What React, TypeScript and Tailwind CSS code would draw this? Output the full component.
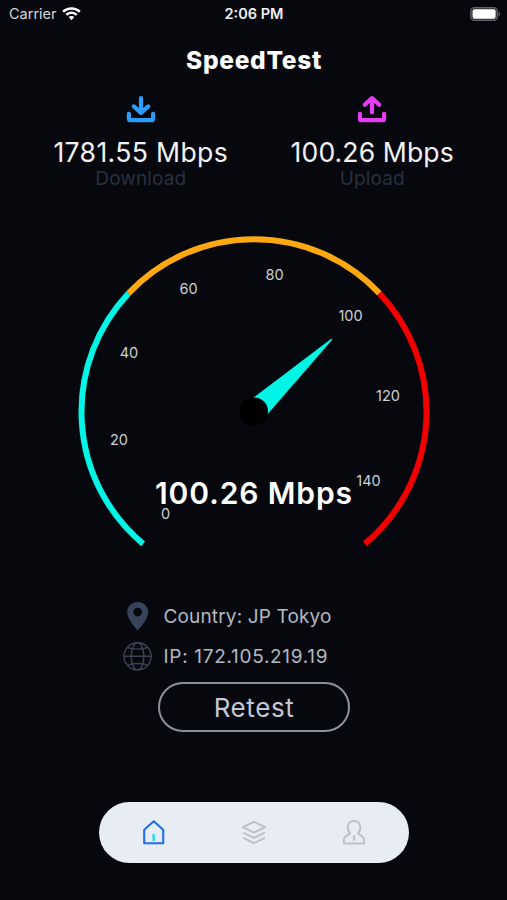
import React, { useState } from 'react';

type IconProps = { active?: boolean };

const CENTER = { x: 254, y: 181.7 };
const RADIUS = 172.5;

const segments = [
  { from: -140, to: -46.67, color: '#00f5e6' },
  { from: -46.67, to: 46.67, color: '#ffa80f' },
  { from: 46.67, to: 140, color: '#f00000' },
];

const ticks = [
  { label: '0', x: 165.5, y: 289 },
  { label: '20', x: 119, y: 215 },
  { label: '40', x: 129, y: 128 },
  { label: '60', x: 188.5, y: 64 },
  { label: '80', x: 274.5, y: 50 },
  { label: '100', x: 350.5, y: 91 },
  { label: '120', x: 388, y: 170.5 },
  { label: '140', x: 368.5, y: 255.5 },
];

// angle is measured clockwise from 12 o'clock
const polar = (angle: number) => {
  const rad = (angle * Math.PI) / 180;
  return `${(CENTER.x + RADIUS * Math.sin(rad)).toFixed(2)} ${(CENTER.y - RADIUS * Math.cos(rad)).toFixed(2)}`;
};

const WifiIcon = () => (
  <svg width="19" height="14" viewBox="0 0 19 14" fill="#fff">
    <path d="M9.5 0.2c3.5 0 6.7 1.3 9.2 3.6l-1.7 1.9c-2-1.9-4.6-3-7.5-3s-5.5 1.1-7.5 3L0.3 3.8C2.8 1.5 6 0.2 9.5 0.2z" />
    <path d="M9.5 4.6c2.3 0 4.4 0.9 6 2.4l-1.7 1.8c-1.2-1.1-2.7-1.7-4.3-1.7s-3.1 0.6-4.3 1.7L3.5 7c1.6-1.5 3.7-2.4 6-2.4z" />
    <path d="M9.5 9c1.1 0 2.1 0.4 2.8 1.1L9.5 13.3 6.7 10.1C7.4 9.4 8.4 9 9.5 9z" />
  </svg>
);

const BatteryIcon = () => (
  <svg width="31" height="14" viewBox="0 0 31 14">
    <rect x="0.8" y="0.7" width="26.6" height="12.6" rx="3.8" fill="#2b2c31" stroke="#606166" strokeWidth="1.3" />
    <rect x="2.6" y="2.3" width="23" height="9.4" rx="2" fill="#fff" />
    <path d="M28.6 4.8c1.1 0.4 1.5 1.2 1.5 2.2s-0.4 1.8-1.5 2.2z" fill="#606166" />
  </svg>
);

const DownloadIcon = () => (
  <svg width="30" height="28" viewBox="0 0 30 28" fill="none" stroke="#2b9cf8" strokeWidth="4.2" strokeLinecap="round" strokeLinejoin="round">
    <path d="M15 3.1v14.2M7.8 11.4l7.2 6.5 7.2-6.5" />
    <path d="M2.9 18.8v4.6c0 1.3 0.7 1.8 1.8 1.8h20.6c1.1 0 1.8-0.5 1.8-1.8v-4.6" />
  </svg>
);

const UploadIcon = () => (
  <svg width="30" height="28" viewBox="0 0 30 28" fill="none" stroke="#e73cf5" strokeWidth="4.2" strokeLinecap="round" strokeLinejoin="round">
    <path d="M15 17.5v-14M7.8 9.8l7.2-6.7 7.2 6.7" />
    <path d="M2.9 18.8v4.6c0 1.3 0.7 1.8 1.8 1.8h20.6c1.1 0 1.8-0.5 1.8-1.8v-4.6" />
  </svg>
);

const PinIcon = () => (
  <svg width="30" height="30" viewBox="0 0 30 30">
    <path
      fillRule="evenodd"
      d="M14.7 1C8.7 1 4.2 5.4 4.2 11c0 6 5.500 13 10.500 18.500C19.700 24 25.200 17 25.200 11 25.200 5.400 20.700 1 14.700 1zm0 5.800a4.300 4.300 0 1 1 0 8.600 4.300 4.300 0 0 1 0-8.600z"
      fill="#36435a"
    />
  </svg>
);

const GlobeIcon = () => (
  <svg width="30" height="30" viewBox="0 0 30 30" fill="none" stroke="#3a4354" strokeWidth="1.4">
    <circle cx="14.6" cy="15.3" r="13.6" />
    <ellipse cx="14.6" cy="15.3" rx="6.3" ry="13.6" />
    <path d="M1 15.3h27.2M4.6 6.5c5.5 2.2 14.5 2.2 20 0M4.6 24.1c5.5-2.2 14.5-2.2 20 0" />
  </svg>
);

const HomeIcon = ({ active }: IconProps) => (
  <svg width="26" height="28" viewBox="0 0 26 28" fill="none" strokeLinejoin="round">
    <path d="M3.2 10.8L12.7 2.3l9.5 8.5v13.5h-19z" stroke={active ? '#2070ee' : '#bdbfc2'} strokeWidth="2.1" />
    <path d="M12.7 15v7" stroke={active ? '#3fd6e4' : '#bdbfc2'} strokeWidth="2.6" />
  </svg>
);

const LayersIcon = ({ active }: IconProps) => (
  <svg width="26" height="28" viewBox="0 0 26 28" fill="none" stroke={active ? '#2070ee' : '#bdbfc2'} strokeWidth="1.9" strokeLinejoin="round" strokeLinecap="round">
    <path d="M13 2.8l11 5.4-11 5.4L2 8.2z" />
    <path d="M2.8 14l10.2 4.9L23.2 14" />
    <path d="M2.8 19.2L13 24.2l10.2-5" />
  </svg>
);

const UserIcon = ({ active }: IconProps) => (
  <svg width="26" height="28" viewBox="0 0 26 28" fill="none" stroke={active ? '#2070ee' : '#bdbfc2'} strokeWidth="1.9" strokeLinejoin="round">
    <path d="M9.2 14.2C7.5 12.9 6.7 11 6.7 8.5 6.7 4.6 9.3 2 13 2s6.300 2.600 6.300 6.500c0 2.500-0.800 4.400-2.500 5.700l4.500 3.200c1.300 0.900 1.800 2.200 1.800 3.900v3.200H2.900v-3.200c0-1.700 0.500-3 1.800-3.900z" />
    <path d="M13 16.5v5" strokeWidth="2.2" />
  </svg>
);

const tabs = [
  { id: 'home', Icon: HomeIcon },
  { id: 'layers', Icon: LayersIcon },
  { id: 'user', Icon: UserIcon },
];

const Gauge = () => (
  <svg width="507" height="330" viewBox="0 0 507 330" className="block">
    {segments.map((segment) => (
      <path
        key={segment.color}
        d={`M ${polar(segment.from)} A ${RADIUS} ${RADIUS} 0 0 1 ${polar(segment.to)}`}
        fill="none"
        stroke={segment.color}
        strokeWidth="6"
      />
    ))}
    {ticks.map((tick) => (
      <text key={tick.label} x={tick.x} y={tick.y} textAnchor="middle" fontSize="14.5" fill="#cfd0d2">
        {tick.label}
      </text>
    ))}
    <path d="M331.2 108.8l1 1L266 186 249 171z" fill="#00f5e6" />
    <circle cx="254" cy="181.5" r="14" fill="#000" />
    <text x="254" y="274.2" textAnchor="middle" fontSize="30" fontWeight="600" fill="#fff" letterSpacing="0.9">
      100.26 Mbps
    </text>
  </svg>
);

const App = () => {
  const [activeTab, setActiveTab] = useState('home');

  return (
    <div className="w-[507px] h-[900px] overflow-hidden bg-[#06080d] text-white font-['Inter',sans-serif] flex flex-col items-center">
      <div className="w-full h-7 pl-[9px] pr-[6px] grid grid-cols-3 items-center text-[14.5px] leading-7 shrink-0">
        <div className="flex items-center gap-[5px] text-[#d4d5d7]">
          <span>Carrier</span>
          <WifiIcon />
        </div>
        <div className="text-center font-semibold text-[#f0f0f2] -ml-[2px]">2:06 PM</div>
        <div className="flex justify-end">
          <BatteryIcon />
        </div>
      </div>

      <h1 className="mt-4 h-8 leading-8 pl-px text-[24.5px] font-extrabold tracking-[0.7px]">SpeedTest</h1>

      <div className="mt-[19px] ml-[6px] w-[463px] flex justify-between shrink-0">
        <div className="flex-1 flex flex-col items-center">
          <DownloadIcon />
          <div className="mt-[13px] h-8 leading-8 text-[26.6px] tracking-[0.35px] text-[#f1f1f3] whitespace-nowrap">1781.55 Mbps</div>
          <div className="h-[22px] leading-[22px] text-[19px] tracking-[0.1px] text-[#2a3040]">Download</div>
        </div>
        <div className="flex-1 flex flex-col items-center">
          <UploadIcon />
          <div className="mt-[13px] h-8 leading-8 text-[26.6px] tracking-[0.1px] text-[#f1f1f3] whitespace-nowrap">100.26 Mbps</div>
          <div className="h-[22px] leading-[22px] text-[19px] tracking-[0.1px] text-[#2a3040]">Upload</div>
        </div>
      </div>

      <div className="mt-[40px] shrink-0">
        <Gauge />
      </div>

      <div className="mt-[41px] w-[262px] flex flex-col gap-[10px] text-[19px] text-[#b4b8c2] shrink-0">
        <div className="h-[30px] flex items-center gap-[11px]">
          <PinIcon />
          <span className="pt-[3px] tracking-[0.15px]">Country: JP Tokyo</span>
        </div>
        <div className="h-[30px] flex items-center gap-[11px]">
          <GlobeIcon />
          <span className="pt-[3px] tracking-[0.7px]">IP: 172.105.219.19</span>
        </div>
      </div>

      <button className="mt-[11px] ml-px w-[192px] h-[50px] pt-[2px] shrink-0 rounded-full border-2 border-[#8c929c] text-[26px] leading-none text-[#c3c7d6] tracking-[0.6px]">
        Retest
      </button>

      <nav className="mt-[70px] ml-px w-[310px] h-[61px] px-[5px] shrink-0 rounded-full bg-[#e8ecf4] flex items-center">
        {tabs.map(({ id, Icon }) => (
          <button key={id} onClick={() => setActiveTab(id)} className="flex-1 flex justify-center">
            <Icon active={activeTab === id} />
          </button>
        ))}
      </nav>
    </div>
  );
};

export default App;
